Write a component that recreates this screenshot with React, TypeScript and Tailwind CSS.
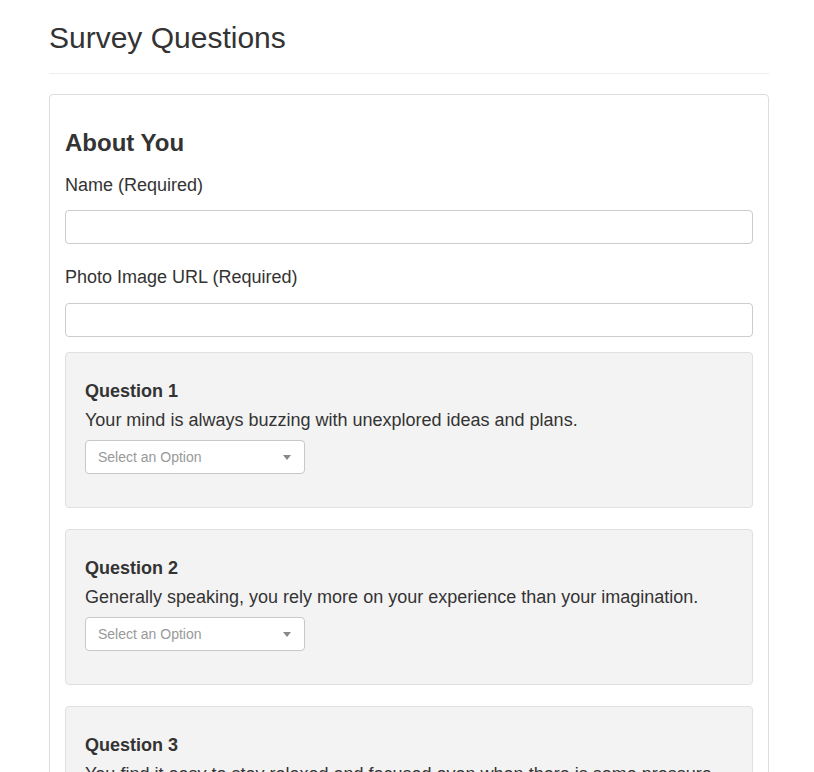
import React from 'react';

const questions = [
  'Your mind is always buzzing with unexplored ideas and plans.',
  'Generally speaking, you rely more on your experience than your imagination.',
  'You find it easy to stay relaxed and focused even when there is some pressure.',
  'You rarely do something just out of sheer curiosity.',
];

function SelectBox() {
  return (
    <div className="mt-[7px] flex h-[34px] w-[220px] items-center justify-between rounded-[4px] border border-[#c8c8c8] bg-white pl-[12px] pr-[13px]">
      <span className="text-[14px] leading-[20px] text-[#999]">Select an Option</span>
      <span className="h-0 w-0 border-x-[4px] border-t-[5px] border-x-transparent border-t-[#888]" />
    </div>
  );
}

export default function App() {
  return (
    <div className="min-h-screen bg-white text-[#333]" style={{ fontFamily: '"Liberation Sans", Arial, sans-serif' }}>
      <div className="ml-[49px] w-[720px] pb-[40px]">
        <h1 className="pt-[21px] text-[30px] font-light leading-[33px]">Survey Questions</h1>
        <hr className="mt-[19px] border-0 border-t border-[#eee]" />

        {/* panel */}
        <div className="mt-[20px] rounded-[4px] border border-[#ddd] p-[15px]">
          <h3 className="mt-[19px] text-[24px] font-bold leading-[27px]">About You</h3>

          <label className="mt-[16px] block text-[18px] leading-[26px]">Name (Required)</label>
          <input
            type="text"
            className="mt-[12px] block h-[34px] w-full rounded-[4px] border border-[#ccc] px-3 outline-none"
          />

          <label className="mt-[20px] block text-[18px] leading-[26px]">Photo Image URL (Required)</label>
          <input
            type="text"
            className="mt-[13px] block h-[34px] w-full rounded-[4px] border border-[#ccc] px-3 outline-none"
          />

          <div className="mt-[15px] flex flex-col gap-[21px]">
            {questions.map((q, i) => (
              <div
                key={i}
                className="h-[156px] rounded-[4px] border border-[#e0e0e0] bg-[#f3f3f3] pl-[19px] pr-[19px] pt-[28px]"
              >
                <h4 className="text-[18px] font-bold leading-[20px]">Question {i + 1}</h4>
                <p className="mt-[6px] text-[18px] leading-[26px]">{q}</p>
                <SelectBox />
              </div>
            ))}
          </div>
        </div>
      </div>
    </div>
  );
}
